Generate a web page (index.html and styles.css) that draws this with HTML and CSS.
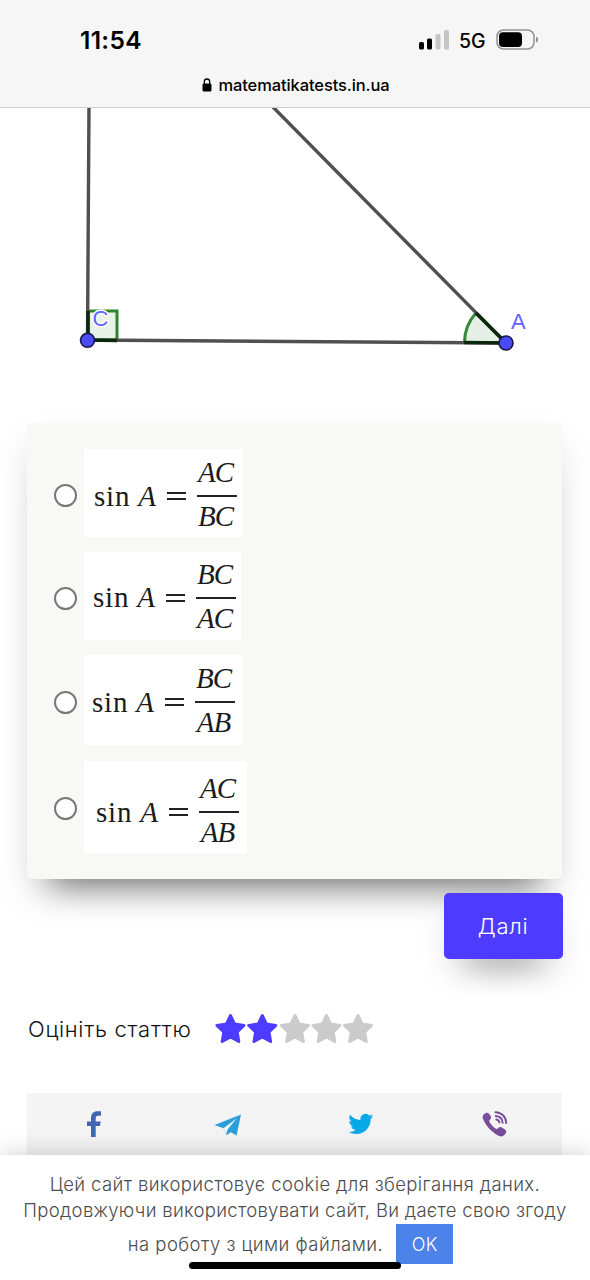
FILE: index.html
```html
<!DOCTYPE html>
<html lang="uk">
<head>
<meta charset="utf-8">
<title>matematikatests.in.ua</title>
<link rel="stylesheet" href="styles.css">
</head>
<body>
<div class="screen">
  <header class="browser-bar">
    <div class="status">
      <span class="time">11:54</span>
      <div class="indicators">
        <svg class="signal" width="31" height="20" viewBox="0 0 31 20"><rect x="0" y="12" width="5" height="7.500" rx="1.600"/><rect x="8" y="8.500" width="5" height="11" rx="1.600"/><g fill="#c5c5c5"><rect x="16.500" y="4" width="5" height="15.500" rx="1.600"/><rect x="25" y="0" width="5" height="19.500" rx="1.600"/></g></svg>
        <span class="network">5G</span>
        <svg class="battery" width="43" height="22" viewBox="0 0 43 22"><rect x="1" y="1" width="37" height="19" rx="6.500" fill="none" stroke="#929292" stroke-width="1.500"/><rect x="3" y="3.200" width="23" height="14.800" rx="4"/><path d="M40 7.500Q42.200 8 42.200 10.500T40 13.500Z" fill="#929292"/></svg>
      </div>
    </div>
    <div class="address">
      <svg width="10" height="14" viewBox="0 0 10 14"><rect x=".5" y="5.500" width="9" height="8" rx="1.500"/><path d="M2.300 6V3.700a2.700 2.700 0 0 1 5.400 0V6" fill="none" stroke="#000" stroke-width="1.300"/></svg>
      <span class="host">matematikatests.in.ua</span>
    </div>
  </header>

  <main class="page">
    <svg class="figure" width="590" height="315" viewBox="0 108 590 315">
      <rect x="88" y="311" width="29" height="29" fill="#e9f2e9" stroke="#2b842e" stroke-width="3"/>
      <path d="M506 343L475 312A44 44 0 0 0 464.500 342Z" fill="#e6efe6"/>
      <path d="M476 313A44 44 0 0 0 464.500 342" fill="none" stroke="#35893a" stroke-width="3"/>
      <path d="M89 104L87.500 340L506 343L267 101" fill="none" stroke="#505050" stroke-width="3.400"/>
      <path d="M88 311V340L117 340.500M464 342.500L506 343L476 313" fill="none" stroke="#0b280d" stroke-width="3.500"/>
      <g class="vertex"><text class="halo" x="92.500" y="326">C</text><text x="511" y="328.500">A</text></g>
      <g fill="#4b4bf5" stroke="#17174b" stroke-width="1.600"><circle cx="87.500" cy="340.300" r="7"/><circle cx="506" cy="343" r="7"/></g>
    </svg>

    <form class="quiz">
      <label class="option"><span class="radio"></span><span class="formula first"><span class="lhs">sin <i>A</i></span><span class="equals"></span><span class="fraction"><i>AC</i><i>BC</i></span></span></label>
      <label class="option"><span class="radio"></span><span class="formula second"><span class="lhs">sin <i>A</i></span><span class="equals"></span><span class="fraction"><i>BC</i><i>AC</i></span></span></label>
      <label class="option"><span class="radio"></span><span class="formula third"><span class="lhs">sin <i>A</i></span><span class="equals"></span><span class="fraction"><i>BC</i><i>AB</i></span></span></label>
      <label class="option"><span class="radio"></span><span class="formula fourth"><span class="lhs">sin <i>A</i></span><span class="equals"></span><span class="fraction"><i>AC</i><i>AB</i></span></span></label>
    </form>

    <button class="next">Далі</button>

    <div class="rating">
      <span class="rating-label">Оцініть статтю</span>
      <svg class="stars" width="160" height="34" viewBox="0 0 160 34">
        <defs><path id="star" d="M16 3.500L20 12L29.500 13.400L22.700 20L24.300 29.500L16 25L7.700 29.500L9.300 20L2.500 13.400L12 12Z" stroke-width="3" stroke-linejoin="round"/></defs>
        <g fill="#4d3bff" stroke="#4d3bff"><use href="#star" x="-.5"/><use href="#star" x="31.300"/></g>
        <g fill="#cbcbcb" stroke="#cbcbcb"><use href="#star" x="64"/><use href="#star" x="95.500"/><use href="#star" x="127"/></g>
      </svg>
    </div>

    <div class="share">
      <svg width="32" height="32" viewBox="0 0 32 32"><path d="M13 29V18H9V13.500H13V10.500C13 5.500 15.500 3.200 19.500 3.200H23V7.700H20.200C18.200 7.700 17.700 8.700 17.700 10.500V13.500H22.700L22 18H17.700V29Z" fill="#4267b2"/></svg>
      <svg width="32" height="32" viewBox="0 0 32 32"><path d="M2.500 17L29 6.500L24.500 27.500L18.500 24L14.500 27L12 20.500Z" fill="#2a9fdc"/><path d="M11.500 20.300L24.500 10.500L15.600 21.600L14.500 26Z" fill="#f4f4f4"/><path d="M16.500 22.300L14.700 27L18.500 24.500Z" fill="#2a9fdc"/></svg>
      <svg width="32" height="32" viewBox="0 0 32 32"><path transform="translate(3.300 3.500) scale(1.040)" d="M23.953 4.570a10 10 0 0 1-2.825.775 4.958 4.958 0 0 0 2.163-2.723c-.951.555-2.005.959-3.127 1.184a4.920 4.920 0 0 0-8.384 4.482C7.690 8.095 4.067 6.130 1.640 3.162a4.822 4.822 0 0 0-.666 2.475c0 1.710.870 3.213 2.188 4.096a4.904 4.904 0 0 1-2.228-.616v.060a4.923 4.923 0 0 0 3.946 4.827 4.996 4.996 0 0 1-2.212.085 4.936 4.936 0 0 0 4.604 3.417 9.867 9.867 0 0 1-6.102 2.105c-.390 0-.779-.023-1.170-.067a13.995 13.995 0 0 0 7.557 2.209c9.053 0 13.998-7.496 13.998-13.985 0-.210 0-.420-.015-.630A9.935 9.935 0 0 0 24 4.590z" fill="#08a9e9"/></svg>
      <svg width="32" height="32" viewBox="0 0 32 32"><path d="M7 5C8.800 4 10 5.300 11.200 7.300C12.600 9.700 12.200 10.700 10.600 12C9.800 13 10.500 14.500 12.500 16.800C14.700 19.300 16.500 21 18 20.900C19.300 20.500 19.600 18.900 21.200 18.900C22.700 18.900 25.500 21 26.800 22.300C28.500 24.500 25 28.300 22.300 28.500C19.500 28.200 13.800 24.500 10.500 21C7.300 17.500 4 12 3.600 9.300C3.500 7.500 5 6 7 5Z" fill="#784d99"/><g fill="none" stroke="#784d99" stroke-width="1.900" stroke-linecap="round"><path d="M16.500 4.300C22.500 4.500 27 8.500 27.200 15"/><path d="M16.800 8C20.800 8.300 23.400 10.800 23.700 14.700"/><path d="M17.300 11.500C19.200 11.700 20.200 12.800 20.400 14.500"/></g></svg>
    </div>
  </main>

  <aside class="cookie">
    <span class="line one">Цей сайт використовує cookie для зберігання даних.</span>
    <span class="line two">Продовжуючи використовувати сайт, Ви даєте свою згоду</span>
    <span class="confirm"><span class="line three">на роботу з цими файлами.</span><button class="ok">OK</button></span>
    <span class="home-indicator"></span>
  </aside>
</div>
</body>
</html>
```
FILE: styles.css
```css
* { box-sizing: border-box; }
body { margin: 0; background: #fff; font-family: "Inter", "Open Sans", sans-serif; }
svg { display: block; flex: none; }
button { border: 0; padding: 0; font-family: inherit; }

.screen { position: relative; display: flex; flex-direction: column; width: 590px; height: 1280px; overflow: hidden; }

.browser-bar { flex: none; height: 108px; background: #f6f6f6; border-bottom: 1px solid #cfcfcf; color: #000; }
.status { display: flex; justify-content: space-between; align-items: center; height: 80px; padding: 0 51px 0 80px; }
.time { font-size: 24.5px; font-weight: 600; letter-spacing: .3px; }
.indicators { display: flex; align-items: center; }
.signal { margin-right: 1px; }
.network { width: 37px; margin-left: 8.5px; padding-top: 1px; font-size: 19.5px; font-weight: 500; line-height: 22px; }
.address { display: flex; align-items: center; justify-content: center; gap: 6px; height: 9px; padding-left: 2px; }
.host { font-size: 16.5px; font-weight: 500; letter-spacing: -.1px; white-space: nowrap; }

.page { flex: none; display: flex; flex-direction: column; }
.vertex { font: 22px "Liberation Sans", sans-serif; fill: #6464ff; }
.halo { paint-order: stroke; stroke: #fff; stroke-width: 3px; }

.quiz { display: flex; flex-direction: column; height: 456px; margin: 0 28px 0 27px; padding: 26px 0 26px 27px; border-radius: 5px; background: #f8f8f4; box-shadow: 0 32px 30px -26px rgba(0,0,0,.48), 0 18px 36px -4px rgba(0,0,0,.14); }
.option { display: flex; align-items: center; }
.radio { flex: none; width: 23px; height: 23px; margin: 4px 7px 0 0; border: 2px solid #787878; border-radius: 50%; background: #fff; }
.formula { display: flex; align-items: center; background: #fff; color: #1b1b1b; font: 29px/34px "Liberation Serif", serif; }
.lhs { width: 73px; white-space: nowrap; letter-spacing: .8px; }
.equals { width: 19px; height: 8px; margin-top: 1px; border: solid #222; border-width: 2px 0; }
.fraction { display: flex; flex-direction: column; width: 40px; margin-left: 11px; text-align: center; letter-spacing: -1px; }
.fraction i { padding-right: 3px; }
.fraction i:first-child { height: 43px; line-height: 37px; border-bottom: 2px solid #222; }
.fraction i:last-child { height: 40px; line-height: 39px; }
.first { width: 159px; height: 88px; padding: 5px 0 0 10px; }
.second { width: 157px; height: 88px; padding: 2px 0 0 9px; }
.third { width: 158px; height: 90px; padding: 3px 0 0 8px; }
.fourth { width: 163px; height: 92px; padding: 9px 0 0 12px; }
.option:nth-child(2) { margin-top: 15px; }
.option:nth-child(3) { margin-top: 15px; }
.option:nth-child(4) { margin-top: 16px; }
.option:nth-child(4) .radio { margin-top: 2px; }

.next { align-self: flex-end; width: 119px; height: 66px; margin: 14px 27.5px 0 0; border-radius: 5px; background: #4d3bff; box-shadow: 0 32px 30px -26px rgba(0,0,0,.4), 0 16px 32px -4px rgba(0,0,0,.12); color: #fff; font-size: 22px; font-weight: 300; letter-spacing: .7px; }

.rating { display: flex; align-items: center; height: 34px; margin: 53px 0 0 28px; }
.rating-label { width: 187px; color: #111; font-size: 22px; font-weight: 350; line-height: 32px; white-space: nowrap; letter-spacing: .72px; }

.share { display: grid; grid-template-columns: repeat(4, 1fr); justify-items: center; height: 90px; margin: 47px 28px 0 27px; padding-top: 15px; background: #f4f4f4; }

.cookie { position: absolute; left: 0; right: 0; bottom: 0; display: flex; flex-direction: column; align-items: center; height: 125px; padding-top: 16px; background: #fff; box-shadow: 0 0 24px rgba(0,0,0,.2); color: #4d4d4d; font-size: 18.5px; font-weight: 300; line-height: 26px; }
.line { white-space: nowrap; }
.one { letter-spacing: .38px; }
.two { letter-spacing: .3px; }
.three { letter-spacing: .46px; }
.confirm { display: flex; align-items: center; margin: 1px 9px 0 0; }
.ok { width: 57px; height: 40px; margin-left: 13px; background: #4c83eb; color: #fff; font-size: 18px; font-weight: 300; letter-spacing: .4px; }
.home-indicator { position: absolute; left: 189px; top: 107px; width: 212px; height: 7px; border-radius: 4px; background: #000; }
```
